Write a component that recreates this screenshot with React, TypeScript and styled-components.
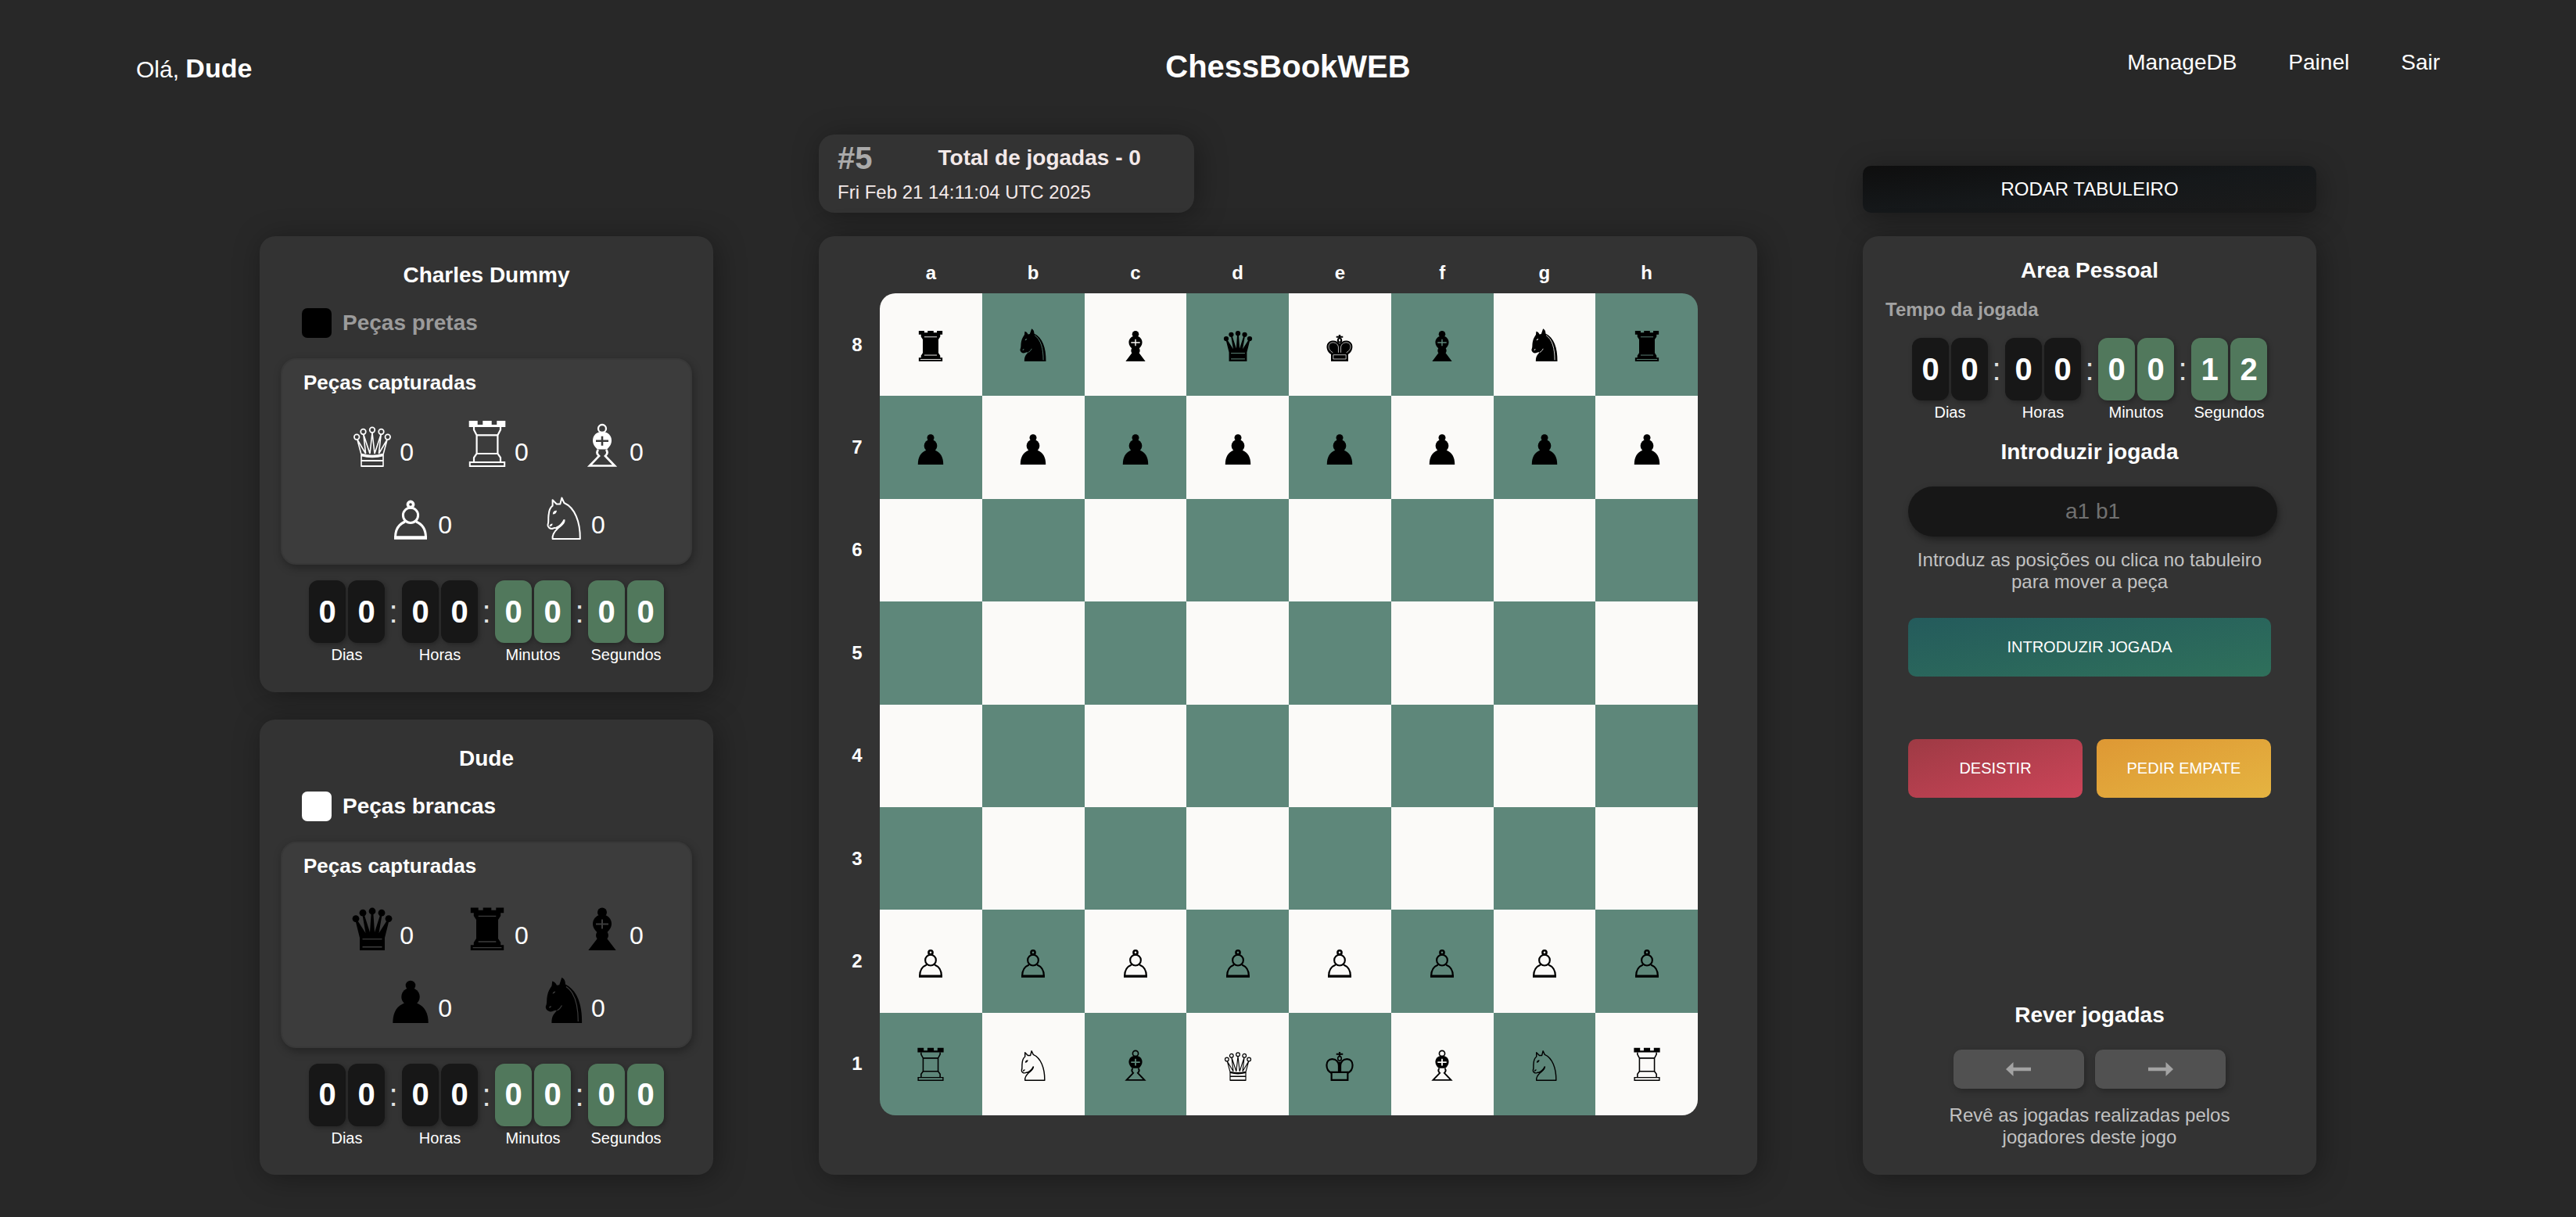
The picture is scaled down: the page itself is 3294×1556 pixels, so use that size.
import React, { useId } from "react";
import styled, { createGlobalStyle } from "styled-components";

const font = '"Liberation Sans", Helvetica, Arial, sans-serif';
const LIGHT = "#fbfaf8";
const DARK = "#5e877a";
const INSET = "#3c3c3c";

const GlobalStyle = createGlobalStyle`
  *, *::before, *::after { box-sizing: border-box; }
  html { background: #282828; }
  body { margin: 0; background: #282828; color: #fff; font-family: ${font}; }
  h1, h2, h3, p, ul { margin: 0; padding: 0; }
  button, input { font-family: inherit; }
`;

/* ---------- header ---------- */

const Header = styled.header`
  display: grid;
  grid-template-columns: 1fr auto 1fr;
  align-items: baseline;
  padding: 61px 174px 63px;
`;
const Greeting = styled.p`
  font-size: 30px;
  line-height: 38px;
  strong {
    font-size: 34px;
    line-height: 1;
  }
`;
const Brand = styled.h1`
  font-size: 40px;
  line-height: 48px;
`;
const Nav = styled.nav`
  display: flex;
  align-self: start;
  justify-content: flex-end;
  gap: 66px;
`;
const NavLink = styled.a`
  color: #fff;
  font-size: 28px;
  line-height: 38px;
  text-decoration: none;
`;

/* ---------- page grid ---------- */

const Main = styled.main`
  display: grid;
  grid-template-columns: 580fr 1200fr 580fr;
  column-gap: 135px;
  row-gap: 30px;
  max-width: 2630px;
  width: calc(100% - 96px);
  margin: 0 auto;
  padding-bottom: 54px;
`;
const Card = styled.section`
  background: #333;
  border-radius: 20px;
  box-shadow: 4px 4px 36px rgba(0, 0, 0, 0.34);
`;
const GameInfo = styled(Card)`
  grid-column: 2;
  justify-self: start;
  width: 40%;
  padding: 10px 24px 12px;
  color: #f3e9e9;
  white-space: nowrap;
`;
const InfoRow = styled.div`
  display: flex;
  gap: 84px;
  line-height: 40px;
  font-weight: bold;
`;
const GameNumber = styled.span`
  color: #aaa;
  font-size: 40px;
`;
const MoveCount = styled.h2`
  font-size: 28px;
`;
const GameDate = styled.p`
  margin-top: 10px;
  font-size: 24px;
  line-height: 28px;
`;
const RotateButton = styled.button`
  align-self: end;
  height: 60px;
  border: 0;
  border-radius: 10px;
  background: linear-gradient(to bottom right, #0e0e0e, #15181a 50%, #1b1b1b);
  color: #fff;
  font-size: 24px;
  box-shadow: 2px 6px 36px rgba(0, 0, 0, 0.36);
`;

/* ---------- players ---------- */

const Players = styled.div`
  display: grid;
  grid-auto-rows: 1fr;
  gap: 35px;
`;
const PlayerCard = styled(Card)`
  padding: 34px 27px 33px;
`;
const CardTitle = styled.h2`
  font-size: 28px;
  line-height: 32px;
  text-align: center;
`;
const SideRow = styled.div<{ $muted: boolean }>`
  display: flex;
  align-items: center;
  gap: 14px;
  height: 38px;
  margin: 26px 0 26px 27px;
  color: ${(p) => (p.$muted ? "#9b9b9b" : "#fff")};
  font-size: 28px;
  font-weight: bold;
`;
const Swatch = styled.span<{ $color: string }>`
  width: 38px;
  height: 38px;
  border-radius: 7px;
  background: ${(p) => p.$color};
`;
const Captured = styled.div`
  border: 2px solid #383838;
  border-radius: 20px;
  background: ${INSET};
  padding: 14px 0 30px;
  box-shadow: 2px 4px 12px rgba(0, 0, 0, 0.32);
`;
const CapturedTitle = styled.h3`
  padding-left: 27px;
  font-size: 26px;
  line-height: 30px;
`;
const CapturedRow = styled.ul<{ $gap: number }>`
  display: flex;
  justify-content: center;
  gap: ${(p) => p.$gap}px;
  margin-top: 33px;
  padding-left: 27px;
  list-style: none;
`;
const CapturedItem = styled.li`
  display: flex;
  align-items: flex-end;
  gap: 7px;
`;
const Count = styled.span`
  margin-bottom: 3px;
  font-size: 32px;
  line-height: 32px;
`;

/* ---------- clock ---------- */

const ClockRow = styled.div`
  display: flex;
  justify-content: center;
  margin-top: 20px;
`;
const Unit = styled.div`
  display: flex;
  flex-direction: column;
  align-items: center;
  gap: 3px;
  width: 97px;
`;
const Tiles = styled.div`
  display: flex;
  gap: 3px;
`;
const Tile = styled.span<{ $active: boolean }>`
  display: grid;
  place-items: center;
  width: 47px;
  height: 80px;
  border-radius: 12px;
  background: ${(p) => (p.$active ? "#51785c" : "#171717")};
  font-size: 40px;
  font-weight: bold;
  box-shadow: 2px 2px 6px rgba(0, 0, 0, 0.3);
`;
const Colon = styled.span`
  width: 22px;
  color: #e2e2e2;
  font-size: 40px;
  line-height: 80px;
  text-align: center;
`;
const UnitLabel = styled.span`
  font-size: 20px;
  line-height: 24px;
`;

/* ---------- board ---------- */

const BoardCard = styled(Card)`
  display: grid;
  grid-template-columns: 58px 1fr;
  grid-template-rows: 53px 1fr;
  aspect-ratio: 1;
  padding: 20px 76px 76px 20px;
  font-size: 24px;
  font-weight: bold;
`;
const Files = styled.div`
  grid-column: 2;
  display: grid;
  grid-template-columns: repeat(8, 1fr);
  place-items: center;
`;
const Ranks = styled.div`
  display: grid;
  grid-template-rows: repeat(8, 1fr);
  place-items: center;
`;
const Squares = styled.div`
  display: grid;
  grid-template: repeat(8, 1fr) / repeat(8, 1fr);
  border-radius: 20px;
  overflow: hidden;
`;
const Square = styled.button<{ $dark: boolean }>`
  display: grid;
  place-items: center;
  border: 0;
  padding: 0;
  background: ${(p) => (p.$dark ? DARK : LIGHT)};
`;

/* ---------- personal area ---------- */

const Personal = styled(Card)`
  display: flex;
  flex-direction: column;
  padding: 28px 58px 34px;
`;
const TimeLabel = styled.h3`
  margin: 20px 0 2px -29px;
  color: #a2a2a2;
  font-size: 24px;
  line-height: 28px;
`;
const FieldTitle = styled(CardTitle)`
  margin-top: 23px;
`;
const MoveInput = styled.input`
  width: calc(100% + 8px);
  height: 64px;
  margin-top: 28px;
  border: 0;
  border-radius: 32px;
  background: #171717;
  color: #fff;
  font-size: 28px;
  text-align: center;
  box-shadow: 2px 4px 10px rgba(0, 0, 0, 0.4);
  &::placeholder { color: #707070; }
`;
const Hint = styled.p<{ $gap: number }>`
  margin-top: ${(p) => p.$gap}px;
  color: #c2c2c2;
  font-size: 24px;
  line-height: 28px;
  text-align: center;
`;
const ActionButton = styled.button<{ $from: string; $to: string }>`
  flex: 1;
  height: 75px;
  border: 0;
  border-radius: 10px;
  background: linear-gradient(to bottom right, ${(p) => p.$from}, ${(p) => p.$to});
  color: #fff;
  font-size: 20px;
`;
const Actions = styled.div<{ $top: number }>`
  display: flex;
  gap: 18px;
  margin-top: ${(p) => p.$top}px;
`;
const Review = styled.div`
  margin-top: auto;
`;
const ReviewButtons = styled.div`
  display: flex;
  justify-content: center;
  gap: 14px;
  margin-top: 28px;
`;
const ArrowButton = styled.button`
  display: grid;
  place-items: center;
  width: 36%;
  height: 50px;
  border: 0;
  border-radius: 10px;
  background: #515151;
  box-shadow: 2px 3px 8px rgba(0, 0, 0, 0.28);
`;

/* ---------- pieces ---------- */

type Kind = "king" | "queen" | "rook" | "bishop" | "knight" | "pawn";
type Side = "black" | "white";

/* Every piece is drawn on a 56 x 60 field and stands on its lower edge. */
function solid(kind: Kind, cut: string) {
  switch (kind) {
    case "queen":
      return (
        <>
          <circle cx="7" cy="19.6" r="4.4" />
          <circle cx="16" cy="12.2" r="4.4" />
          <circle cx="28" cy="10" r="4.4" />
          <circle cx="40" cy="12.2" r="4.4" />
          <circle cx="49" cy="19.6" r="4.4" />
          <path d="M12 60V44L6 20h2L19.5 38 15 12h2L25 37 26.8 10h2.4L31 37 39 12h2L36.5 38 48 20h2L44 44V60Z" />
          <path d="M15.5 45.6h25M15.5 55.8h25" stroke={cut} strokeWidth="1.4" />
        </>
      );
    case "rook":
      return (
        <>
          <path d="M6.8 5.6h9.9v3.2h6V5.6h10.6v3.2h6V5.6h9.9v6.6h-4V16l-3.2 5v24l3.2 5v3.3h4V60H6.8v-6.7h4V50l3.2-5V21l-3.2-5v-3.8h-4Z" />
          <path d="M16.7 16.4h22.6M16.7 49h22.6M9.6 56.7h36.8" stroke={cut} strokeWidth="1.3" />
        </>
      );
    case "bishop":
      return (
        <>
          <circle cx="28" cy="11.4" r="6" />
          <path d="M28 14.5c-8 0-12 6-12 11.500 0 5.200 3 8 5.300 10.800-2 3.600-1.300 6.600.3 8.400L10.300 60h35.400L34.400 45.200c1.600-1.800 2.300-4.800.3-8.400C37 34 40 31.200 40 26c0-5.500-4-11.500-12-11.500Z" />
          <path d="M28 20.500v12M20 26.500h16" stroke={cut} strokeWidth="2" />
        </>
      );
    case "knight":
      return (
        <>
          <path d="M12.400 60C12.400 55 13 52 15 49l4-5c-3-1-4 1.500-8.500 1.500C7 44.500 4.500 42 4.800 39 6.500 35 6 33 6.300 29 6.800 23 8.500 18 12.500 12.500L13.200 6.400C16 7 18 9 19 11.800l3.200-.6L25.400 1.800C28.500 3.500 30 6 30 10.500 45 18 51.500 36 51.100 60Z" />
          <path d="M31 13.500C42 21 46.300 37 46.300 58M25.500 37.500c-1.800 3.500-3.500 5-6 6.500" fill="none" stroke={cut} strokeWidth="1.200" />
          <path d="M13.500 22.500c.4-2 2-3 3.700-3-.3 1.800-1.700 2.800-3.700 3ZM9 40.500c.4-1.600 1.400-2.400 3-2.300-.2 1.400-1.300 2.400-3 2.300Z" fill={cut} />
        </>
      );
    case "pawn":
      return (
        <>
          <circle cx="28" cy="12" r="6.300" />
          <ellipse cx="28" cy="26.500" rx="11.700" ry="11.500" />
          <path d="M19 35C10 39 5.300 47 5.300 60h45.400C50.700 47 46 39 37 35Z" />
        </>
      );
    case "king":
      return (
        <>
          <path d="M26.300 12.400h3.400v2.400H34v3h-4.300v4h-3.400v-4H22v-3h4.300Z" />
          <ellipse cx="28" cy="22.500" rx="4.500" ry="4.800" />
          <path d="M12.600 60V47.500C2 41 2 24 15.500 23c5.500-.3 10 2.500 12.500 5.500 2.500-3 7-5.800 12.500-5.500C54 24 54 41 43.400 47.500V60Z" />
          <g fill="none" stroke={cut} strokeWidth="1">
            <path d="M16 44.500C6 40 6 27 15.500 26.300c7 0 10 4.700 10.300 8.700v9.500M40 44.500c10-4.500 10-17.500.5-18.200-7 0-10 4.700-10.300 8.700v9.500M16.600 48.500h22.800v7.400H16.600Z" />
          </g>
          <ellipse cx="28" cy="22.200" rx="1.500" ry="2.400" fill={cut} />
        </>
      );
  }
}

function outline(kind: Kind, ink: string, maskId: string) {
  switch (kind) {
    case "queen":
      return (
        <g fill="none" stroke={ink} strokeWidth="1.700">
          <circle cx="8.200" cy="21.700" r="3.300" />
          <circle cx="16.500" cy="15" r="3.300" />
          <circle cx="28" cy="12.700" r="3.300" />
          <circle cx="39.500" cy="15" r="3.300" />
          <circle cx="47.800" cy="21.700" r="3.300" />
          <path d="M14 59V44L8.900 25 19.600 43 16.800 18.300 25 43 28 16l3 27 8.200-24.700L36.400 43 47.100 25 42 44V59Z" strokeWidth="1.600" />
          <path d="M14 44.500q14 4 28 0" strokeWidth="3.400" />
          <path d="M14 52h28M14 59h28" strokeWidth="2" />
        </g>
      );
    case "rook":
      return (
        <>
          <path d="M4.700 1h11v5h6.600V1h11.400v5h6.600V1h11v8H4.700Z" fill={ink} />
          <g fill="none" stroke={ink} strokeWidth="2.200">
            <path d="M11 9v3.500l3.600 7V43L11 48v5M45 9v3.500l-3.600 7V43l3.600 5v5" />
            <path d="M14 19.300h28M14 43h28" />
            <path d="M5.800 54h44.400v5H5.800Z" strokeWidth="2" />
          </g>
        </>
      );
    case "bishop":
      return (
        <>
          <mask id={maskId}>
            <rect width="56" height="60" fill="#fff" />
            <path d="M28 20.700v12M20 26.700h16" stroke="#000" strokeWidth="2.600" />
          </mask>
          <circle cx="28" cy="11" r="5" fill="none" stroke={ink} strokeWidth="2.300" />
          <path
            d="M28 15c-8 0-12 5.500-12 11.200 0 5 3 8.300 6 11.300h12c3-3 6-6.300 6-11.300C40 20.500 36 15 28 15Z"
            fill={ink}
            mask={`url(#${maskId})`}
          />
          <path d="M23 38q-3.500 4 1 8L12 58.500h32L32 46q4.500-4 1-8" fill="none" stroke={ink} strokeWidth="2.700" />
        </>
      );
    case "knight":
      return (
        <>
          <path
            d="M28.600 34.300C29 39 26 40.500 20.300 45.500 15.500 50 13 54 13.600 59H48.800C49 37 42 19 28.400 13L25.400 6.500 23.300 14.500H18.800L13.600 9.300V16.700C10 19 9 23 8.500 29 7.800 34 9 37 7.500 41c-.5 3 3 6 7 4.500 1.500-1.100 2 0 3.500-.5 4-2 7.600-4.200 10.600-10.700"
            fill="none"
            stroke={ink}
            strokeWidth="2"
            strokeLinejoin="round"
          />
          <path d="M13.800 27.500c0-3 2-5 5.200-4.800-.2 3-2 4.800-5.200 4.800ZM9.500 43c.6-2.500 2-3.500 4-3.500.2 2.300-1.500 4-4 3.500ZM28.600 34.300c-3 6-5 8-8.300 10.500 5-.8 8.300-5.500 8.300-10.500Z" fill={ink} />
        </>
      );
    case "pawn":
      return (
        <g fill="none" stroke={ink} strokeWidth="3">
          <circle cx="28" cy="15" r="3.600" strokeWidth="3.600" />
          <ellipse cx="28" cy="28.800" rx="9.600" ry="9.600" />
          <path d="M21 37C12 40.500 8.500 47 8.500 57.500h39C47.500 47 44 40.500 35 37" />
          <path d="M7 57.500h42" strokeWidth="4.600" />
        </g>
      );
    case "king":
      return (
        <g fill="none" stroke={ink} strokeWidth="3">
          <path d="M28 8.200V17M22 12.200h12" />
          <ellipse cx="28" cy="20" rx="3.200" ry="4" strokeWidth="2.200" />
          <path d="M13.500 46C2 41 1.500 21.500 14.500 21 22 20.800 26 26.500 26.500 33v13M42.500 46C54 41 54.500 21.500 41.500 21 34 20.800 30 26.500 29.500 33v13" />
          <path d="M28 26v20" strokeWidth="4.500" />
          <path d="M13.500 44.500h29v14h-29Z" />
        </g>
      );
  }
}

const PieceSvg = styled.svg<{ $large?: boolean }>`
  display: block;
  width: ${(p) => (p.$large ? 56 : 40)}px;
  height: ${(p) => (p.$large ? 60 : 43)}px;
`;

function Piece({ kind, side, ink = "#000", cut, large }: { kind: Kind; side: Side; ink?: string; cut: string; large?: boolean }) {
  const id = useId();
  return (
    <PieceSvg viewBox="0 0 56 60" $large={large} aria-hidden="true">
      {side === "black" ? solid(kind, cut) : outline(kind, ink, id)}
    </PieceSvg>
  );
}

/* ---------- composed parts ---------- */

function Clock({ digits }: { digits: string }) {
  const units = ["Dias", "Horas", "Minutos", "Segundos"];
  return (
    <ClockRow>
      {units.map((label, i) => (
        <React.Fragment key={label}>
          {i > 0 && <Colon>:</Colon>}
          <Unit>
            <Tiles>
              <Tile $active={i > 1}>{digits[i * 2]}</Tile>
              <Tile $active={i > 1}>{digits[i * 2 + 1]}</Tile>
            </Tiles>
            <UnitLabel>{label}</UnitLabel>
          </Unit>
        </React.Fragment>
      ))}
    </ClockRow>
  );
}

const capturedRows: { gap: number; kinds: Kind[] }[] = [
  { gap: 66, kinds: ["queen", "rook", "bishop"] },
  { gap: 115, kinds: ["pawn", "knight"] },
];

function Player({ name, side }: { name: string; side: Side }) {
  const isBlack = side === "black";
  return (
    <PlayerCard>
      <CardTitle>{name}</CardTitle>
      <SideRow $muted={isBlack}>
        <Swatch $color={isBlack ? "#000" : "#fff"} />
        {isBlack ? "Peças pretas" : "Peças brancas"}
      </SideRow>
      <Captured>
        <CapturedTitle>Peças capturadas</CapturedTitle>
        {capturedRows.map(({ gap, kinds }) => (
          <CapturedRow key={gap} $gap={gap}>
            {kinds.map((kind) => (
              <CapturedItem key={kind}>
                <Piece kind={kind} side={isBlack ? "white" : "black"} ink="#fff" cut={INSET} large />
                <Count>0</Count>
              </CapturedItem>
            ))}
          </CapturedRow>
        ))}
      </Captured>
      <Clock digits="00000000" />
    </PlayerCard>
  );
}

const backRank: Kind[] = ["rook", "knight", "bishop", "queen", "king", "bishop", "knight", "rook"];

function pieceAt(row: number, col: number): { kind: Kind; side: Side } | null {
  if (row === 0) return { kind: backRank[col], side: "black" };
  if (row === 1) return { kind: "pawn", side: "black" };
  if (row === 6) return { kind: "pawn", side: "white" };
  if (row === 7) return { kind: backRank[col], side: "white" };
  return null;
}

function Board() {
  const files = "abcdefgh".split("");
  return (
    <BoardCard>
      <Files>
        {files.map((f) => (
          <span key={f}>{f}</span>
        ))}
      </Files>
      <Ranks>
        {[8, 7, 6, 5, 4, 3, 2, 1].map((r) => (
          <span key={r}>{r}</span>
        ))}
      </Ranks>
      <Squares>
        {Array.from({ length: 64 }, (_, i) => {
          const row = Math.floor(i / 8);
          const col = i % 8;
          const dark = (row + col) % 2 === 1;
          const piece = pieceAt(row, col);
          return (
            <Square key={i} type="button" $dark={dark} aria-label={`${files[col]}${8 - row}`}>
              {piece && <Piece {...piece} cut={dark ? DARK : LIGHT} />}
            </Square>
          );
        })}
      </Squares>
    </BoardCard>
  );
}

function Arrow({ left }: { left?: boolean }) {
  return (
    <svg width="32" height="20" viewBox="0 0 32 20" fill="#a3a3a3" aria-hidden="true">
      {left ? <path d="M0 10 9.500 1V7.800H32v4.400H9.500V19Z" /> : <path d="M32 10 22.500 1V7.800H0v4.400h22.500V19Z" />}
    </svg>
  );
}

export default function App() {
  return (
    <>
      <GlobalStyle />
      <Header>
        <Greeting>
          Olá, <strong>Dude</strong>
        </Greeting>
        <Brand>ChessBookWEB</Brand>
        <Nav>
          <NavLink href="#manage">ManageDB</NavLink>
          <NavLink href="#painel">Painel</NavLink>
          <NavLink href="#sair">Sair</NavLink>
        </Nav>
      </Header>
      <Main>
        <GameInfo>
          <InfoRow>
            <GameNumber>#5</GameNumber>
            <MoveCount>Total de jogadas - 0</MoveCount>
          </InfoRow>
          <GameDate>Fri Feb 21 14:11:04 UTC 2025</GameDate>
        </GameInfo>
        <RotateButton type="button">RODAR TABULEIRO</RotateButton>
        <Players>
          <Player name="Charles Dummy" side="black" />
          <Player name="Dude" side="white" />
        </Players>
        <Board />
        <Personal>
          <CardTitle>Area Pessoal</CardTitle>
          <TimeLabel>Tempo da jogada</TimeLabel>
          <Clock digits="00000012" />
          <FieldTitle>
            <label htmlFor="move">Introduzir jogada</label>
          </FieldTitle>
          <MoveInput id="move" type="text" placeholder="a1 b1" />
          <Hint $gap={16}>Introduz as posições ou clica no tabuleiro para mover a peça</Hint>
          <Actions $top={32}>
            <ActionButton type="button" $from="#245b5c" $to="#2f705b">INTRODUZIR JOGADA</ActionButton>
          </Actions>
          <Actions $top={80}>
            <ActionButton type="button" $from="#9e3a44" $to="#cc4559">DESISTIR</ActionButton>
            <ActionButton type="button" $from="#de9834" $to="#e5b441">PEDIR EMPATE</ActionButton>
          </Actions>
          <Review>
            <CardTitle>Rever jogadas</CardTitle>
            <ReviewButtons>
              <ArrowButton type="button" aria-label="Anterior">
                <Arrow left />
              </ArrowButton>
              <ArrowButton type="button" aria-label="Seguinte">
                <Arrow />
              </ArrowButton>
            </ReviewButtons>
            <Hint $gap={20}>Revê as jogadas realizadas pelos jogadores deste jogo</Hint>
          </Review>
        </Personal>
      </Main>
    </>
  );
}
